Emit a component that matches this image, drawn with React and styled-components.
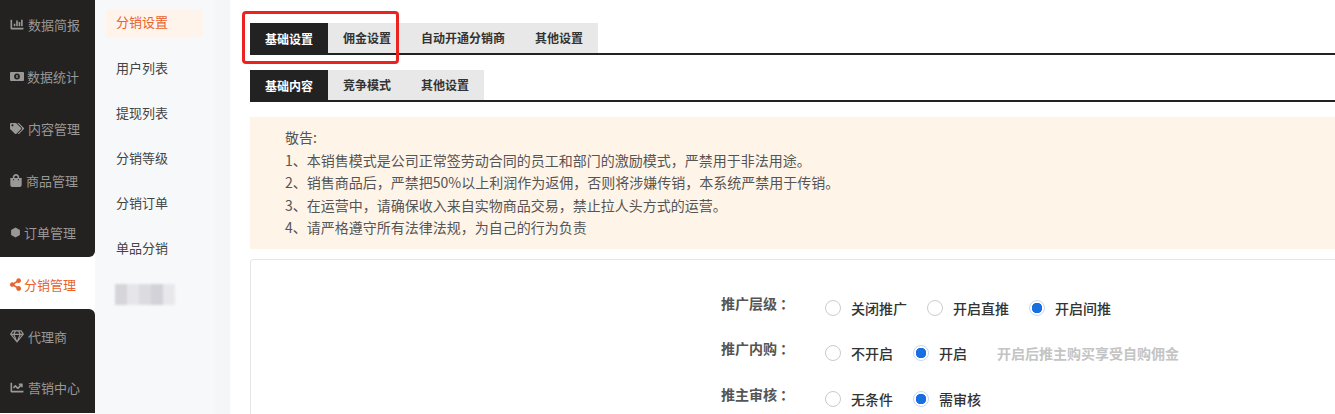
import styled, { createGlobalStyle } from "styled-components"
import { FaChartBar, FaTags, FaShoppingBag, FaShareAlt, FaRegGem, FaChartLine } from "react-icons/fa"

const GlobalStyle = createGlobalStyle`
    html, body {
        margin: 0;
        padding: 0;
        height: 414px;
        overflow: hidden;
        background: #fff;
        font-family: "Noto Sans CJK SC", "Liberation Sans", sans-serif;
    }

    * {
        box-sizing: border-box;
    }
`

const Page = styled.div`
    display: flex;
    width: 1335px;
    height: 414px;
    overflow: hidden;
    position: relative;
`

const Rail = styled.nav`
    flex: 0 0 95px;
    display: flex;
    flex-direction: column;
    margin-top: -3px;
    background: #fff;
`

const RailItem = styled.div`
    flex: 0 0 52px;
    display: flex;
    align-items: center;
    gap: ${({ $gap }) => $gap}px;
    padding: ${({ $last }) => ($last ? "0" : "2px")} 0 0 10px;
    font-size: 13px;
    color: ${({ $active }) => ($active ? "#e8622c" : "#999896")};
    background: ${({ $active }) => ($active ? "#fff" : "#242220")};
    border-bottom-right-radius: ${({ $beforeActive }) => ($beforeActive ? "6px" : "0")};
    border-top-right-radius: ${({ $afterActive }) => ($afterActive ? "6px" : "0")};

    svg {
        flex: none;
        width: ${({ $iconWidth }) => $iconWidth}px;
        height: 13px;
    }
`

const SubNav = styled.aside`
    flex: 0 0 120px;
    display: flex;
    flex-direction: column;
    padding: 9px 12px 0 11px;
    background: #f7f8fa;
`

const SubItem = styled.div`
    flex: 0 0 ${({ $active }) => ($active ? "29px" : "45px")};
    margin-bottom: ${({ $active }) => ($active ? "8px" : "0")};
    display: flex;
    align-items: center;
    padding: 0 0 ${({ $active }) => ($active ? "5px" : "3px")} 10px;
    font-size: 13px;
    border-radius: 4px;
    color: ${({ $active }) => ($active ? "#e8622c" : "#444")};
    background: ${({ $active }) => ($active ? "#fff4ec" : "transparent")};
`

const BlurredItem = styled.div`
    width: 60px;
    height: 21px;
    margin: 13px 0 0 9px;
    filter: blur(1px);
    background: linear-gradient(
        90deg,
        #d6d6da 0 12px,
        #e6e6ea 12px 24px,
        #dcdce0 24px 36px,
        #d2d2d8 36px 48px,
        #e8e8ec 48px 60px
    );
`

const Gutter = styled.div`
    flex: 0 0 15px;
    background: #f5f6f8;
`

const Main = styled.main`
    flex: 1;
    min-width: 0;
    margin-top: 3px;
    padding: 20px 0 0 20px;
    background: #fff;
`

const TabBar = styled.div`
    display: flex;
    height: 32px;
    margin-bottom: 15px;
    border-bottom: 2px solid #222;
`

const Tab = styled.div`
    height: ${({ $active }) => ($active ? "32px" : "30px")};
    padding: 0 15px 2px;
    display: flex;
    align-items: center;
    font-size: 12px;
    font-weight: 700;
    white-space: nowrap;
    color: ${({ $active }) => ($active ? "#fff" : "#333")};
    background: ${({ $active }) => ($active ? "#222" : "#e8e8e8")};
`

const Notice = styled.div`
    height: 132px;
    padding: 9px 0 0 35px;
    font-size: 14px;
    line-height: 22.5px;
    color: #555;
    background: #fff4e8;
`

const FormCard = styled.section`
    height: 160px;
    margin-top: 10px;
    padding: 34px 0 0 470px;
    background: #fff;
    border: 1px solid #e6e6e6;
    border-right: 0;
    border-radius: 4px 0 0 0;
`

const FormRow = styled.div`
    display: flex;
    align-items: flex-start;
    height: 45.4px;
`

const Label = styled.div`
    flex: 0 0 104px;
    margin-top: -1px;
    font-size: 14px;
    font-weight: 700;
    line-height: 20px;
    color: #555;
`

const Colon = styled.span`
    margin-left: 3px;
`

const Options = styled.div`
    display: flex;
    align-items: center;
    gap: 20px;
    height: 20px;
    margin-top: 4px;
`

const Option = styled.label`
    display: flex;
    align-items: center;
    gap: 10px;
    font-size: 14px;
    font-weight: 500;
    color: #333;
`

const RadioDot = styled.span`
    width: 16px;
    height: 16px;
    border-radius: 50%;
    border: 1px solid ${({ $checked }) => ($checked ? "#c5d8f5" : "#ccc")};
    background: ${({ $checked }) => ($checked ? "radial-gradient(circle, #1a6fe0 0 5px, #fff 5.5px)" : "#fff")};
`

const Hint = styled.span`
    margin-left: 10px;
    font-size: 14px;
    font-weight: 700;
    color: #c4c4c4;
`

const Highlight = styled.div`
    position: absolute;
    left: 242px;
    top: 11px;
    width: 157px;
    height: 53px;
    border: 3px solid #ea2320;
    border-radius: 4px;
    pointer-events: none;
`

const Hexagon = () => (
    <svg viewBox="0 0 14 14" fill="currentColor">
        <path d="M7 .5l5.6 3.2v6.6L7 13.5l-5.6-3.2V3.7z" />
    </svg>
)

const Banknote = () => (
    <svg viewBox="0 0 14 13" fill="currentColor">
        <path fillRule="evenodd" d="M1 2h12a1 1 0 0 1 1 1v7a1 1 0 0 1-1 1H1a1 1 0 0 1-1-1V3a1 1 0 0 1 1-1zm6 1.6a2.9 2.9 0 1 0 0 5.8 2.9 2.9 0 0 0 0-5.8z" />
        <rect x="6.4" y="5" width="1.2" height="3" />
    </svg>
)

const railItems = [
    { icon: <FaChartBar />, text: "数据简报", iconWidth: 14, gap: 4 },
    { icon: <Banknote />, text: "数据统计", iconWidth: 14, gap: 3 },
    { icon: <FaTags />, text: "内容管理", iconWidth: 14, gap: 4 },
    { icon: <FaShoppingBag />, text: "商品管理", iconWidth: 12, gap: 4 },
    { icon: <Hexagon />, text: "订单管理", iconWidth: 11, gap: 3, beforeActive: true },
    { icon: <FaShareAlt />, text: "分销管理", iconWidth: 11, gap: 3, active: true },
    { icon: <FaRegGem />, text: "代理商", iconWidth: 14, gap: 4, afterActive: true },
    { icon: <FaChartLine />, text: "营销中心", iconWidth: 14, gap: 4, last: true },
]

const subItems = ["用户列表", "提现列表", "分销等级", "分销订单", "单品分销"]

const notices = [
    "敬告:",
    "1、本销售模式是公司正常签劳动合同的员工和部门的激励模式，严禁用于非法用途。",
    "2、销售商品后，严禁把50%以上利润作为返佣，否则将涉嫌传销，本系统严禁用于传销。",
    "3、在运营中，请确保收入来自实物商品交易，禁止拉人头方式的运营。",
    "4、请严格遵守所有法律法规，为自己的行为负责",
]

const formRows = [
    { label: "推广层级", options: ["关闭推广", "开启直推", "开启间推"], checked: 2 },
    { label: "推广内购", options: ["不开启", "开启"], checked: 1, hint: "开启后推主购买享受自购佣金" },
    { label: "推主审核", options: ["无条件", "需审核"], checked: 1 },
]

export default function App() {
    return (
        <Page>
            <GlobalStyle />
            <Rail>
                {railItems.map(item => (
                    <RailItem
                        key={item.text}
                        $gap={item.gap}
                        $iconWidth={item.iconWidth}
                        $active={item.active}
                        $last={item.last}
                        $beforeActive={item.beforeActive}
                        $afterActive={item.afterActive}
                    >
                        {item.icon}
                        {item.text}
                    </RailItem>
                ))}
            </Rail>
            <SubNav>
                <SubItem $active>分销设置</SubItem>
                {subItems.map(text => <SubItem key={text}>{text}</SubItem>)}
                <BlurredItem />
            </SubNav>
            <Gutter />
            <Main>
                <TabBar>
                    <Tab $active>基础设置</Tab>
                    <Tab>佣金设置</Tab>
                    <Tab>自动开通分销商</Tab>
                    <Tab>其他设置</Tab>
                </TabBar>
                <TabBar>
                    <Tab $active>基础内容</Tab>
                    <Tab>竞争模式</Tab>
                    <Tab>其他设置</Tab>
                </TabBar>
                <Notice>
                    {notices.map(line => <div key={line}>{line}</div>)}
                </Notice>
                <FormCard>
                    {formRows.map(row => (
                        <FormRow key={row.label}>
                            <Label>{row.label}<Colon>：</Colon></Label>
                            <Options>
                                {row.options.map((option, i) => (
                                    <Option key={option}>
                                        <RadioDot $checked={i === row.checked} />
                                        {option}
                                    </Option>
                                ))}
                                {row.hint && <Hint>{row.hint}</Hint>}
                            </Options>
                        </FormRow>
                    ))}
                </FormCard>
            </Main>
            <Highlight />
        </Page>
    )
}
